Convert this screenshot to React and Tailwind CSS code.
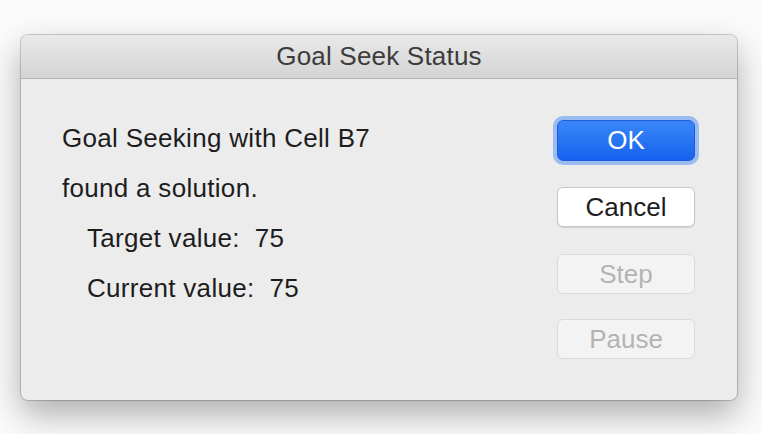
export default function App() {
  return (
    <div
      className="w-[762px] h-[434px] bg-[#fbfbfb] overflow-hidden pt-[35px] pl-[21px]"
      style={{ fontFamily: '"Liberation Sans", Arial, sans-serif' }}
    >
      <div className="w-[716px] h-[365px] bg-[#ececec] rounded-[7px] overflow-hidden shadow-[0_0_0_1px_rgba(0,0,0,0.18),0_14px_34px_rgba(0,0,0,0.32)] flex flex-col">
        <div className="h-[44px] shrink-0 border-b border-[#b4b4b4] bg-gradient-to-b from-[#e9e9e9] to-[#d4d4d4] flex items-center justify-center">
          <span className="text-[26px] text-[#3c3c3c] tracking-[0.2px]">Goal Seek Status</span>
        </div>

        <div className="flex flex-1 justify-between">
          <div className="pl-[41px] pt-[34px] text-[26px] leading-[50px] text-[#1d1d1d] tracking-[0.3px]">
            <p>Goal Seeking with Cell B7</p>
            <p>found a solution.</p>
            <p className="pl-[25px] whitespace-pre">Target value:  75</p>
            <p className="pl-[25px] whitespace-pre">Current value:  75</p>
          </div>

          <div className="pr-[42px] pt-[41px] flex flex-col">
            <button className="w-[138px] h-[41px] rounded-[6px] text-[26px] text-white bg-gradient-to-b from-[#3a86f7] to-[#1662ef] border border-[#1d5ed8] shadow-[0_0_0_4px_rgba(90,150,245,0.55)]">
              OK
            </button>
            <button className="mt-[26px] w-[138px] h-[40px] rounded-[6px] text-[26px] text-[#1d1d1d] bg-white border border-[#c8c8c8] shadow-[0_1px_1px_rgba(0,0,0,0.12)]">
              Cancel
            </button>
            <button className="mt-[27px] w-[138px] h-[40px] rounded-[6px] text-[26px] text-[#b3b3b3] bg-[#f3f3f3] border border-[#dadada]">
              Step
            </button>
            <button className="mt-[25px] w-[138px] h-[40px] rounded-[6px] text-[26px] text-[#b3b3b3] bg-[#f3f3f3] border border-[#dadada]">
              Pause
            </button>
          </div>
        </div>
      </div>
    </div>
  );
}
